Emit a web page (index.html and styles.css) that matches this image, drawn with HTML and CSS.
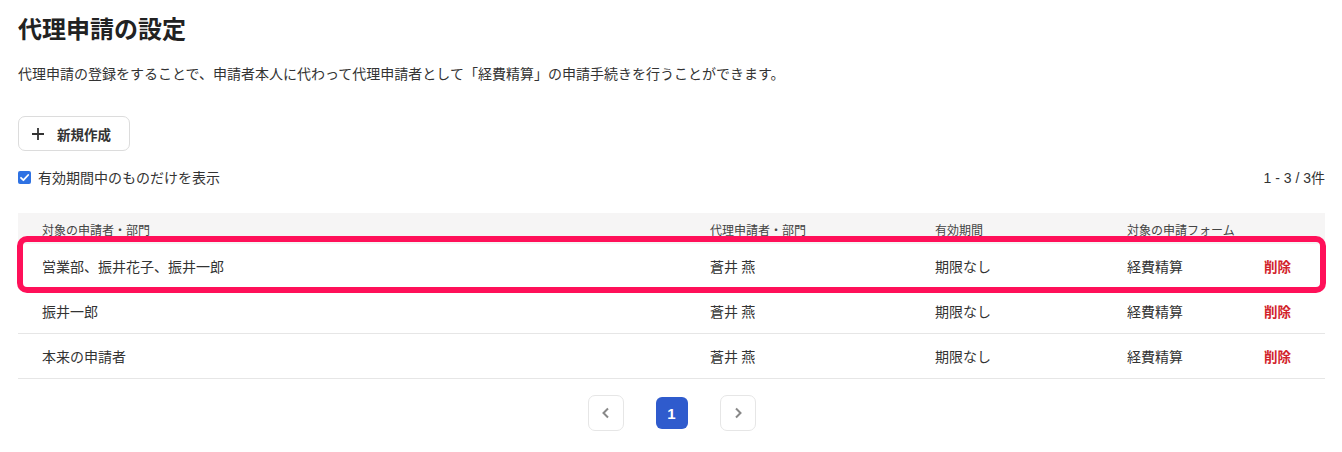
FILE: index.html
```html
<!DOCTYPE html>
<html lang="ja">
<head>
<meta charset="utf-8">
<title>代理申請の設定</title>
<link rel="stylesheet" href="styles.css">
</head>
<body>
<div class="page">
  <h1 class="title">代理申請の設定</h1>
  <p class="desc">代理申請の登録をすることで、申請者本人に代わって代理申請者として「経費精算」の申請手続きを行うことができます。</p>
  <button class="new-btn" type="button">
    <svg class="plus" width="14" height="14" viewBox="0 0 14 14"><path d="M7 1v12M1 7h12" stroke="#333" stroke-width="1.8" fill="none"/></svg>
    <span>新規作成</span>
  </button>
  <div class="filter-row">
    <label class="filter">
      <span class="check"><svg width="13" height="13" viewBox="0 0 13 13"><path d="M3 6.8l2.4 2.4L10.2 4" stroke="#fff" stroke-width="1.8" fill="none" stroke-linecap="round" stroke-linejoin="round"/></svg></span>
      <span>有効期間中のものだけを表示</span>
    </label>
    <span class="count">1 - 3 / 3件</span>
  </div>
  <div class="table">
    <div class="row head">
      <span>対象の申請者・部門</span>
      <span>代理申請者・部門</span>
      <span>有効期間</span>
      <span>対象の申請フォーム</span>
      <span></span>
    </div>
    <div class="row">
      <span>営業部、振井花子、振井一郎</span>
      <span>蒼井 燕</span>
      <span>期限なし</span>
      <span>経費精算</span>
      <span class="del">削除</span>
    </div>
    <div class="row">
      <span>振井一郎</span>
      <span>蒼井 燕</span>
      <span>期限なし</span>
      <span>経費精算</span>
      <span class="del">削除</span>
    </div>
    <div class="row">
      <span>本来の申請者</span>
      <span>蒼井 燕</span>
      <span>期限なし</span>
      <span>経費精算</span>
      <span class="del">削除</span>
    </div>
    <div class="highlight"></div>
  </div>
  <div class="pager">
    <button class="pg-nav" type="button"><svg width="10" height="12" viewBox="0 0 10 12"><path d="M7 1.5L2.5 6 7 10.5" stroke="#888" stroke-width="2" fill="none"/></svg></button>
    <button class="pg-cur" type="button">1</button>
    <button class="pg-nav" type="button"><svg width="10" height="12" viewBox="0 0 10 12"><path d="M3 1.5L7.5 6 3 10.5" stroke="#888" stroke-width="2" fill="none"/></svg></button>
  </div>
</div>
</body>
</html>
```
FILE: styles.css
```css
html, body {
  margin: 0;
  padding: 0;
  background: #fff;
}
body {
  font-family: "Noto Sans CJK JP", "Noto Sans", sans-serif;
  color: #333;
}
.page {
  padding: 11px 17px 0 18px;
}
.title {
  margin: 0;
  font-size: 24px;
  line-height: 34px;
  font-weight: 700;
  color: #222;
}
.desc {
  margin: 18px 0 0;
  font-size: 14px;
  line-height: 20px;
}
.new-btn {
  margin-top: 33px;
  height: 35px;
  width: 112px;
  display: flex;
  align-items: center;
  gap: 12px;
  padding: 0 0 0 12px;
  border: 1px solid #dcdcdc;
  border-radius: 7px;
  background: #fff;
  font-family: inherit;
  font-size: 13.5px;
  font-weight: 700;
  color: #333;
}
.plus {
  display: block;
}
.filter-row {
  margin-top: 16px;
  height: 20px;
  display: flex;
  align-items: center;
  justify-content: space-between;
}
.filter {
  display: flex;
  align-items: center;
  gap: 7px;
  font-size: 14px;
}
.check {
  width: 13px;
  height: 13px;
  border-radius: 2px;
  background: #2f72e3;
  display: flex;
}
.count {
  font-size: 14px;
  font-family: "Liberation Sans", "Noto Sans CJK JP", sans-serif;
  color: #333;
}
.table {
  margin-top: 26px;
  position: relative;
}
.row {
  display: grid;
  grid-template-columns: 668px 225px 192px 137px 1fr;
  padding-left: 24px;
  height: 45px;
  align-items: center;
  border-bottom: 1px solid #e6e6e6;
  box-sizing: border-box;
  font-size: 14px;
}
.row.head {
  height: 31px;
  background: #f6f5f5;
  border-bottom: none;
  font-size: 12px;
  color: #444;
  padding-top: 1px;
}
.del {
  color: #d2232a;
  font-weight: 700;
  font-size: 13.5px;
}
.highlight {
  position: absolute;
  left: -1px;
  right: -1px;
  top: 23px;
  height: 57px;
  box-sizing: border-box;
  border: 6px solid #ff1059;
  border-radius: 10px;
  pointer-events: none;
}
.pager {
  margin-top: 16px;
  display: flex;
  justify-content: center;
  align-items: center;
  gap: 32px;
}
.pg-nav {
  width: 36px;
  height: 36px;
  border: 1px solid #e6e6e6;
  border-radius: 7px;
  background: #fff;
  display: flex;
  align-items: center;
  justify-content: center;
  padding: 0;
}
.pg-cur {
  width: 32px;
  height: 32px;
  border: none;
  border-radius: 6px;
  background: #2f5bcd;
  color: #fff;
  font-family: "Liberation Sans", sans-serif;
  font-weight: 700;
  font-size: 15px;
  padding: 0;
}
```
